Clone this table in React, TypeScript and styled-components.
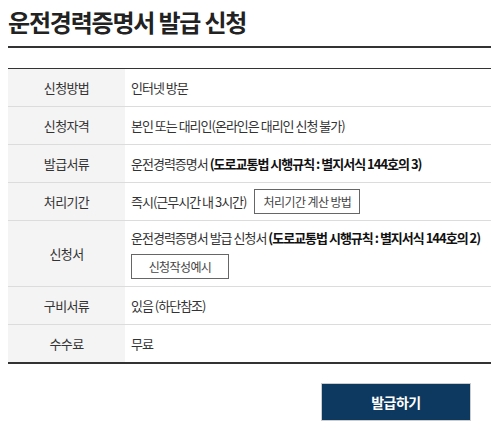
import React from 'react';
import styled, { createGlobalStyle } from 'styled-components';

const colors = {
  text: '#333',
  strong: '#111',
  labelBg: '#f4f4f4',
  line: '#dcdcdc',
  dark: '#333',
  navy: '#0d3960',
};

const GlobalStyle = createGlobalStyle`
  html, body {
    margin: 0;
    padding: 0;
    background: #fff;
    overflow: hidden;
  }
  body {
    font-family: "Noto Sans CJK KR", "Noto Sans", sans-serif;
    color: ${colors.text};
  }
`;

const Page = styled.div`
  padding: 6px 0 0 8px;
`;

const Title = styled.h2`
  margin: 0;
  padding-bottom: 8px;

  font-size: 24px;
  font-weight: 700;
  line-height: 32px;
  letter-spacing: -1.2px;
  color: #222;

  border-bottom: 2px solid ${colors.dark};
`;

const Table = styled.div`
  margin-top: 20px;
  border-top: 1px solid ${colors.dark};
  border-bottom: 2px solid ${colors.dark};
`;

const Row = styled.div`
  display: grid;
  grid-template-columns: 117px 1fr;

  & + & {
    border-top: 1px solid ${colors.line};
  }
`;

const Label = styled.div<{ $pad?: number }>`
  display: flex;
  align-items: center;
  justify-content: center;

  padding: ${p => p.$pad ?? 6}px 0;
  background: ${colors.labelBg};

  font-size: 13px;
  letter-spacing: -0.6px;
  color: ${colors.text};
`;

const Cell = styled.div<{ $pad?: number }>`
  display: flex;
  align-items: center;
  gap: 8px;
  min-height: 25px;
  padding: ${p => p.$pad ?? 6}px 6px;

  font-size: 13px;
  letter-spacing: -1px;
  white-space: nowrap;
  color: ${colors.text};
`;

const Stack = styled.div`
  display: flex;
  flex-direction: column;
  align-items: flex-start;
  gap: 6px;
`;

const Strong = styled.b`
  font-weight: 700;
  color: ${colors.strong};
`;

const Line = styled.span`
  line-height: 20px;
`;

const SmallButton = styled.button<{ $w: number }>`
  width: ${p => p.$w}px;
  height: 25px;
  padding: 0;

  background: #fff;
  border: 1px solid #666;

  font-family: inherit;
  font-size: 12px;
  letter-spacing: -0.6px;
  color: #444;
  cursor: pointer;
`;

const Footer = styled.div`
  display: flex;
  justify-content: flex-end;
  padding: 19px 20px 0 0;
`;

const Submit = styled.button`
  width: 150px;
  height: 38px;

  background: ${colors.navy};
  border: 1px solid #ccc;

  font-family: inherit;
  font-size: 14px;
  font-weight: 700;
  letter-spacing: -0.5px;
  color: #fff;
  cursor: pointer;
`;

const App = () => {
  return (
    <Page>
      <GlobalStyle />
      <Title>운전경력증명서 발급 신청</Title>

      <Table>
        <Row>
          <Label>신청방법</Label>
          <Cell><Line>인터넷 방문</Line></Cell>
        </Row>
        <Row>
          <Label>신청자격</Label>
          <Cell><Line>본인 또는 대리인(온라인은 대리인 신청 불가)</Line></Cell>
        </Row>
        <Row>
          <Label>발급서류</Label>
          <Cell>
            <Line>운전경력증명서 <Strong>(도로교통법 시행규칙 : 별지서식 144호의 3)</Strong></Line>
          </Cell>
        </Row>
        <Row>
          <Label>처리기간</Label>
          <Cell>
            <Line>즉시(근무시간 내 3시간)</Line>
            <SmallButton $w={106}>처리기간 계산 방법</SmallButton>
          </Cell>
        </Row>
        <Row>
          <Label $pad={7}>신청서</Label>
          <Cell $pad={7}>
            <Stack>
              <Line>운전경력증명서 발급 신청서 <Strong>(도로교통법 시행규칙 : 별지서식 144호의 2)</Strong></Line>
              <SmallButton $w={98}>신청작성예시</SmallButton>
            </Stack>
          </Cell>
        </Row>
        <Row>
          <Label>구비서류</Label>
          <Cell><Line>있음 (하단참조)</Line></Cell>
        </Row>
        <Row>
          <Label>수수료</Label>
          <Cell><Line>무료</Line></Cell>
        </Row>
      </Table>

      <Footer>
        <Submit type="button">발급하기</Submit>
      </Footer>
    </Page>
  );
};

export default App;
